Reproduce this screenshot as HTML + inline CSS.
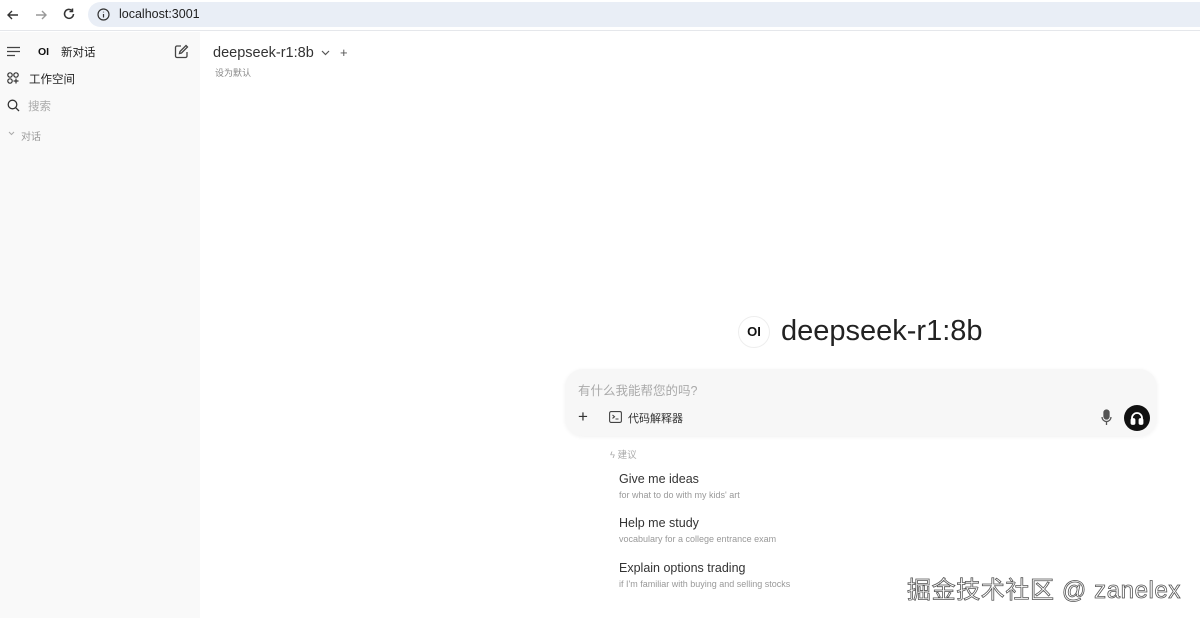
<!DOCTYPE html>
<html><head><meta charset="utf-8">
<style>
*{margin:0;padding:0;box-sizing:border-box}
body{width:1200px;height:618px;overflow:hidden;background:#fff;font-family:"Liberation Sans","Noto Sans CJK SC",sans-serif;color:#222;position:relative}
.top{position:absolute;left:0;top:0;width:1200px;height:31px;background:#fff;border-bottom:1px solid #e5e7eb}
.url{position:absolute;left:88px;top:2px;right:0;height:25px;background:#e9eef6;border-radius:13px 0 0 13px}
.url span{position:absolute;left:31px;top:5px;font-size:12.5px;color:#1f1f1f}
.side{position:absolute;left:0;top:32px;width:200px;height:586px;background:#f9f9f9}
.abs{position:absolute}
.t{font-size:11.5px;color:#222}
</style></head><body>
<div class="top">
 <svg class="abs" style="left:6px;top:8px" width="14" height="14" viewBox="0 0 14 14" fill="none" stroke="#333" stroke-width="1.4"><path d="M12 7H2M6 3L2 7l4 4"/></svg>
 <svg class="abs" style="left:34px;top:8px" width="14" height="14" viewBox="0 0 14 14" fill="none" stroke="#999" stroke-width="1.4"><path d="M2 7h10M8 3l4 4-4 4"/></svg>
 <svg class="abs" style="left:62px;top:7px" width="14" height="14" viewBox="0 0 14 14" fill="none" stroke="#333" stroke-width="1.5"><path d="M11.5 7A4.5 4.5 0 1 1 10 3.5"/><path d="M10.5 1.5v3h-3"/></svg>
 <div class="url">
  <svg class="abs" style="left:9px;top:6px" width="13" height="13" viewBox="0 0 13 13" fill="none" stroke="#333" stroke-width="1.2"><circle cx="6.5" cy="6.5" r="5.5"/><path d="M6.5 6v3.5M6.5 3.8v.6"/></svg>
  <span>localhost:3001</span>
 </div>
</div>
<div class="side">
 <svg class="abs" style="left:7px;top:14px" width="13" height="11" viewBox="0 0 13 11" stroke="#444" stroke-width="1.3"><path d="M0 1.5h13M0 5.5h13M0 9.5h8"/></svg>
 <div class="abs" style="left:38px;top:14px;font-size:10.5px;font-weight:bold;color:#111">OI</div>
 <div class="abs t" style="left:61px;top:12px">新对话</div>
 <svg class="abs" style="left:174px;top:12px" width="15" height="15" viewBox="0 0 15 15" fill="none" stroke="#444" stroke-width="1.3"><path d="M7 2H3a1.5 1.5 0 0 0-1.5 1.5v8.5A1.5 1.5 0 0 0 3 13.5h8.5A1.5 1.5 0 0 0 13 12V8"/><path d="M12 1.5l1.5 1.5-6 6-2 .5.5-2z"/></svg>
 <svg class="abs" style="left:7px;top:40px" width="12" height="12" viewBox="0 0 12 12" fill="none" stroke="#333" stroke-width="1.2"><circle cx="3" cy="3" r="2.2"/><circle cx="9" cy="3" r="2.2"/><circle cx="3" cy="9" r="2.2"/><path d="M9 6.5v5M6.5 9h5"/></svg>
 <div class="abs t" style="left:29px;top:39px">工作空间</div>
 <svg class="abs" style="left:7px;top:67px" width="13" height="13" viewBox="0 0 13 13" fill="none" stroke="#333" stroke-width="1.3"><circle cx="5.5" cy="5.5" r="4.3"/><path d="M8.7 8.7L12 12"/></svg>
 <div class="abs" style="left:28px;top:66px;font-size:11.5px;color:#aaa">搜索</div>
 <svg class="abs" style="left:8px;top:99px" width="7" height="5" viewBox="0 0 7 5" fill="none" stroke="#aaa" stroke-width="1"><path d="M1 1l2.5 2.5L6 1"/></svg>
 <div class="abs" style="left:21px;top:96px;font-size:10px;color:#999">对话</div>
</div>
<div class="abs" style="left:213px;top:45px;font-size:14.5px;color:#333">deepseek-r1:8b</div>
<svg class="abs" style="left:321px;top:50px" width="9" height="6" viewBox="0 0 9 6" fill="none" stroke="#555" stroke-width="1.2"><path d="M1 1l3.5 3.5L8 1"/></svg>
<div class="abs" style="left:340px;top:45px;font-size:13px;color:#555">+</div>
<div class="abs" style="left:215px;top:66px;font-size:9px;color:#888">设为默认</div>

<div class="abs" style="left:738px;top:316px;width:32px;height:32px;border-radius:50%;border:1px solid #eee;background:#fff;font-size:13px;font-weight:bold;text-align:center;line-height:30px;color:#111">OI</div>
<div class="abs" style="left:781px;top:315px;font-size:29px;color:#222">deepseek-r1:8b</div>

<div class="abs" style="left:565px;top:369px;width:592px;height:67px;background:#f7f7f7;border-radius:18px;box-shadow:0 1px 4px rgba(0,0,0,0.06)"></div>
<div class="abs" style="left:578px;top:380px;font-size:12.5px;color:#aaa">有什么我能帮您的吗?</div>
<div class="abs" style="left:578px;top:407px;font-size:17px;color:#333">+</div>
<svg class="abs" style="left:609px;top:411px" width="13" height="12" viewBox="0 0 13 12" fill="none" stroke="#444" stroke-width="1.1"><rect x=".6" y=".6" width="11.8" height="10.8" rx="1.5"/><path d="M3.5 4l2 1.7-2 1.7M6.5 8h3"/></svg>
<div class="abs" style="left:628px;top:410px;font-size:11px;color:#333">代码解释器</div>
<svg class="abs" style="left:1101px;top:409px" width="11" height="17" viewBox="0 0 11 17" fill="none" stroke="#555" stroke-width="1.3"><rect x="3" y="1" width="5" height="9" rx="2.5" fill="#555"/><path d="M1 8a4.5 4.5 0 0 0 9 0M5.5 12.5V16"/></svg>
<div class="abs" style="left:1124px;top:405px;width:26px;height:26px;border-radius:50%;background:#111"></div>
<svg class="abs" style="left:1130px;top:411px" width="14" height="14" viewBox="0 0 14 14" fill="none" stroke="#fff" stroke-width="1.8"><path d="M2 10V7a5 5 0 0 1 10 0v3"/><rect x="1.5" y="8" width="3" height="5" rx="1" fill="#fff"/><rect x="9.5" y="8" width="3" height="5" rx="1" fill="#fff"/></svg>

<div class="abs" style="left:610px;top:447px;font-size:9.5px;color:#aaa">ϟ 建议</div>
<div class="abs" style="left:619px;top:472px;font-size:12.5px;color:#333">Give me ideas</div>
<div class="abs" style="left:619px;top:490px;font-size:9px;color:#999">for what to do with my kids' art</div>
<div class="abs" style="left:619px;top:516px;font-size:12.5px;color:#333">Help me study</div>
<div class="abs" style="left:619px;top:534px;font-size:9px;color:#999">vocabulary for a college entrance exam</div>
<div class="abs" style="left:619px;top:561px;font-size:12.5px;color:#333">Explain options trading</div>
<div class="abs" style="left:619px;top:579px;font-size:9px;color:#999">if I'm familiar with buying and selling stocks</div>

<div class="abs" style="left:907px;top:570px;font-size:24px;color:#fff;-webkit-text-stroke:0.8px #555;letter-spacing:0.6px;white-space:nowrap">掘金技术社区 @ zanelex</div>
</body></html>
